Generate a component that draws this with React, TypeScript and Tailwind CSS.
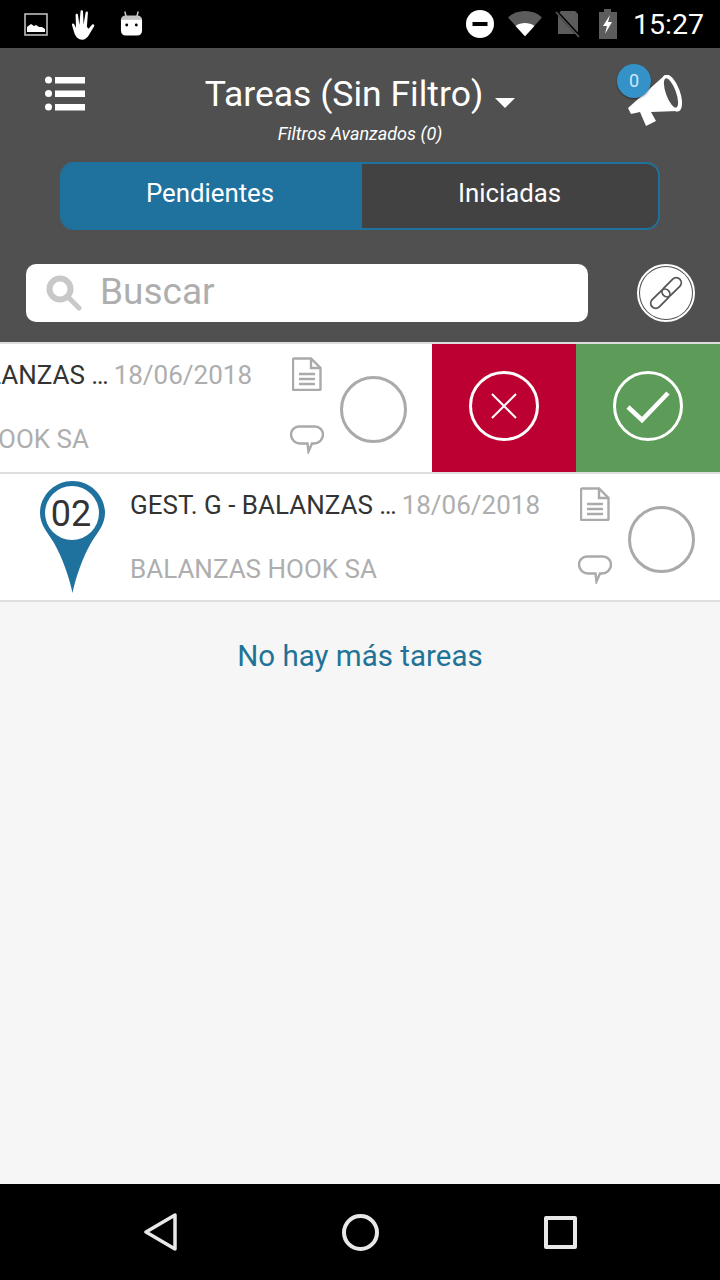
const font = { fontFamily: 'Roboto, sans-serif' };

function StatusBar() {
  return (
    <div className="flex h-12 shrink-0 items-center bg-black pl-6 pr-4 text-white">
      <svg width="24" height="24" viewBox="0 0 24 24" className="shrink-0">
        <rect x="1" y="2" width="22" height="21" fill="none" stroke="#bdbdbd" strokeWidth="1.6" />
        <path d="M3 20v-5l4-3 3 2 2-1 3 2 3 0 3 2v3z" fill="#fff" />
      </svg>
      <svg width="26" height="33" viewBox="0 0 26 33" className="ml-[23px] shrink-0">
        <path
          d="M8 31C4 29 3 24 1 17c-.4-1.6 1.5-2.2 2.2-.8L5 20 4.600 7c0-1.700 2.200-1.700 2.400 0l1.400 10L9.500 3.500c.1-1.700 2.400-1.700 2.500 0l.6 13 2-12c.3-1.600 2.400-1.300 2.300.3l-1 14 1.600 2 3.500-4c1.200-1.300 3 .1 2 1.600l-4.500 7.600C16 31 12 33 8 31z"
          fill="#fff"
        />
      </svg>
      <svg width="23" height="28" viewBox="0 0 24 28" className="ml-[23px] shrink-0">
        <path d="M5 1l1.600 6M19 1l-1.600 6" stroke="#cfcfcf" strokeWidth="1.500" />
        <path d="M1 9c0-2 2-4 5-4h12c3 0 5 2 5 4z" fill="#c4c4c4" />
        <path d="M1 9h22v12c0 3-2 5-5 5H6c-3 0-5-2-5-5z" fill="#fff" />
        <circle cx="7" cy="15" r="1.500" fill="#000" />
        <circle cx="17" cy="15" r="1.500" fill="#000" />
      </svg>
      <div className="flex-1" />
      <svg width="30" height="30" viewBox="0 0 30 30" className="shrink-0">
        <circle cx="15" cy="15" r="14" fill="#fff" />
        <rect x="7.500" y="13" width="15" height="4" fill="#000" />
      </svg>
      <svg width="34" height="28" viewBox="0 0 36 28" className="ml-[13px] shrink-0">
        <path d="M18 27L0 7c10-9 26-9 36 0z" fill="#5c5c5c" />
        <path d="M18 27L8 16c6-4 14-4 20 0z" fill="#fff" />
      </svg>
      <svg width="26" height="28" viewBox="0 0 26 28" className="ml-[13px] shrink-0">
        <path d="M6 1h14l3 3v20H3V4z" fill="#5c5c5c" />
        <path d="M0 0l25 27" stroke="#000" strokeWidth="3" />
        <path d="M1 2l23 25" stroke="#5c5c5c" strokeWidth="1.500" />
      </svg>
      <svg width="20" height="30" viewBox="0 0 20 30" className="ml-[17px] shrink-0">
        <path d="M6 0h7v3h6v27H1V3h5z" fill="#5c5c5c" />
        <path d="M12 6L5 17h4l-2 8 7-12h-4z" fill="#fff" />
      </svg>
      <span className="ml-[15px] mt-[2px] text-[28.500px] leading-none" style={font}>15:27</span>
    </div>
  );
}

function Header() {
  return (
    <div className="shrink-0 border-b-2 border-[#dedede] bg-[#505050]">
      <div className="relative flex h-[114px] justify-center pt-[23px]">
        <svg width="42" height="36" viewBox="0 0 42 36" className="absolute left-[44px] top-[27px]">
          <circle cx="4.500" cy="5" r="3.500" fill="#fff" />
          <circle cx="4.500" cy="18.500" r="3.500" fill="#fff" />
          <circle cx="4.500" cy="32" r="3.500" fill="#fff" />
          <rect x="11" y="2" width="30" height="6.500" fill="#fff" />
          <rect x="11" y="15.500" width="30" height="6.500" fill="#fff" />
          <rect x="11" y="29" width="30" height="6.500" fill="#fff" />
        </svg>
        <div className="flex flex-col items-center">
          <div className="flex items-center">
            <span className="text-[35.500px] leading-[46px] text-white" style={font}>Tareas (Sin Filtro)</span>
            <svg width="20" height="11" viewBox="0 0 20 11" className="ml-[12px] mt-[16px]">
              <path d="M0 1h20L10 11z" fill="#fff" />
            </svg>
          </div>
          <span className="mt-[6px] text-[18px] italic leading-[22px] text-white" style={font}>Filtros Avanzados (0)</span>
        </div>
        <div className="absolute left-[617px] top-[16px] h-[66px] w-[68px]">
          <svg width="54" height="52" viewBox="0 0 54 52" className="absolute left-[11px] top-[11px]">
            <path d="M36 1L0 33l3 6 9-2 6 14 10-5-5-9 27-1z" fill="#fff" />
            <ellipse cx="44" cy="18" rx="8" ry="19.500" transform="rotate(-20 44 18)" fill="#fff" />
            <ellipse cx="43" cy="18" rx="5" ry="15.500" transform="rotate(-20 43 18)" fill="#505050" />
          </svg>
          <div className="absolute left-0 top-0 flex h-[34px] w-[34px] items-center justify-center rounded-full bg-[#3592c8] text-[18px] leading-none text-[#cfe8f7] shadow-[0_1px_2px_rgba(0,0,0,0.4)]" style={font}>
            0
          </div>
        </div>
      </div>
      <div className="mx-[60px] flex h-[68px] overflow-hidden rounded-[14px] border-2 border-[#1f719e]">
        <div className="flex w-[300px] items-center justify-center bg-[#1f719e] pb-[6px] pr-[4px] text-[25.800px] text-white" style={font}>Pendientes</div>
        <div className="flex flex-1 items-center justify-center bg-[#424242] pb-[6px] pr-[1px] text-[25.800px] text-white" style={font}>Iniciadas</div>
      </div>
      <div className="mt-[34px] flex items-center pb-[20px] pl-[26px]">
        <div className="flex h-[58px] w-[562px] items-center rounded-[10px] bg-white pl-[20px]">
          <svg width="36" height="36" viewBox="0 0 36 36" className="shrink-0">
            <circle cx="14" cy="14" r="10.500" fill="none" stroke="#c8c8c8" strokeWidth="6" />
            <path d="M22 22l11 11" stroke="#c8c8c8" strokeWidth="5" strokeLinecap="round" />
          </svg>
          <span className="ml-[18px] pb-[4px] text-[37px] leading-none text-[#aeaeae]" style={font}>Buscar</span>
        </div>
        <div className="ml-[49px] flex h-[58px] w-[58px] items-center justify-center rounded-full border-2 border-white">
          <div className="flex h-[52px] w-[52px] items-center justify-center rounded-full bg-white">
            <svg width="42" height="42" viewBox="0 0 42 42" fill="none" stroke="#555" strokeWidth="1.800">
              <g transform="rotate(-45 21 21)">
                <rect x="1.500" y="16" width="23" height="10" rx="5" />
                <rect x="17.500" y="16" width="23" height="10" rx="5" />
              </g>
            </svg>
          </div>
        </div>
      </div>
    </div>
  );
}

function DocIcon() {
  return (
    <svg width="30" height="34" viewBox="0 0 30 34" fill="none" stroke="#aaaaaa" strokeWidth="2.400">
      <path d="M2 1.500h17l9.500 9.500v21a1 1 0 0 1-1 1H2a1 1 0 0 1-1-1V2.500a1 1 0 0 1 1-1z" />
      <path d="M19 1.500v9.500h9.500" />
      <path d="M7 17h16M7 22h16M7 27h16" />
    </svg>
  );
}

function CommentIcon() {
  return (
    <svg width="34" height="29" viewBox="0 0 34 29" fill="none" stroke="#aaaaaa" strokeWidth="2.400">
      <path d="M9 1.500h16a8 8 0 0 1 8 8a9 9 0 0 1-9 9h-2l-3.500 8-1-8H10a9 9 0 0 1-9-9a8 8 0 0 1 8-8z" />
    </svg>
  );
}

function TaskContent({ number }: { number?: string }) {
  return (
    <div className="flex h-full w-[720px] shrink-0 bg-white">
      <div className="relative ml-[40px] mt-[7px] h-[112px] w-[65px] shrink-0">
        <svg width="65" height="112" viewBox="0 0 65 112" className="absolute left-0 top-0">
          <path
            d="M32.500 0C14.500 0 0 14.500 0 32C0 44 8 52 14 62C22 76 29 95 32.500 112C36 95 43 76 51 62C57 52 65 44 65 32C65 14.500 50.500 0 32.500 0z"
            fill="#1f719e"
          />
          <circle cx="32" cy="32" r="27" fill="#fff" />
        </svg>
        {number && (
          <span className="absolute inset-x-0 top-[13px] pr-[3px] text-center text-[36px] leading-[40px] text-[#333]" style={font}>
            {number}
          </span>
        )}
      </div>
      <div className="ml-[25px] flex w-[410px] flex-col" style={font}>
        <div className="mt-[15px] flex justify-between whitespace-nowrap text-[26px] leading-[32px]">
          <span className="text-[#333]">GEST. G - BALANZAS …</span>
          <span className="text-[#aeaeae]">18/06/2018</span>
        </div>
        <span className="mt-[32px] whitespace-nowrap text-[26px] leading-[32px] text-[#aeaeae]">BALANZAS HOOK SA</span>
      </div>
      <div className="ml-[38px] flex w-[34px] flex-col items-center pt-[13px]">
        <DocIcon />
        <div className="mt-[34px]"><CommentIcon /></div>
      </div>
      <div className="ml-[16px] mt-[32px] h-[67px] w-[67px] rounded-full border-[3px] border-[#aaaaaa]" />
    </div>
  );
}

function SwipeAction({ color, children }: { color: string; children: React.ReactNode }) {
  return (
    <div className={`flex h-full w-[144px] shrink-0 items-center justify-center ${color}`}>
      <svg width="72" height="72" viewBox="0 0 72 72" fill="none" stroke="#fff" className="mt-[-4px]">
        <circle cx="36" cy="36" r="33.500" strokeWidth="3" />
        {children}
      </svg>
    </div>
  );
}

export default function App() {
  return (
    <div className="flex h-[1280px] w-[720px] flex-col overflow-hidden bg-[#f6f6f6]">
      <StatusBar />
      <Header />
      <div className="flex h-[128px] shrink-0 overflow-hidden">
        <div className="ml-[-288px] flex h-full shrink-0">
          <TaskContent />
        </div>
        <SwipeAction color="bg-[#bc0031]">
          <path d="M24 24l24 24M48 24L24 48" strokeWidth="2" />
        </SwipeAction>
        <SwipeAction color="bg-[#5c9c58]">
          <path d="M16 37l14 13 26-27" strokeWidth="4.500" />
        </SwipeAction>
      </div>
      <div className="h-[130px] shrink-0 border-y-2 border-[#dedede]">
        <TaskContent number="02" />
      </div>
      <div className="flex flex-1 justify-center pt-[36px]">
        <span className="text-[29.500px] leading-[36px] text-[#1f7396]" style={font}>No hay más tareas</span>
      </div>
      <div className="flex h-24 shrink-0 items-center justify-center bg-black">
        <svg width="34" height="38" viewBox="0 0 34 38" fill="none" stroke="#e8e8e8" strokeWidth="3.500" strokeLinejoin="round">
          <path d="M2 19L31 2v34z" />
        </svg>
        <div className="ml-[164px] h-[37px] w-[37px] rounded-full border-[4px] border-[#e8e8e8]" />
        <div className="ml-[165px] h-[33px] w-[33px] rounded-[2px] border-[4px] border-[#e8e8e8]" />
      </div>
    </div>
  );
}
